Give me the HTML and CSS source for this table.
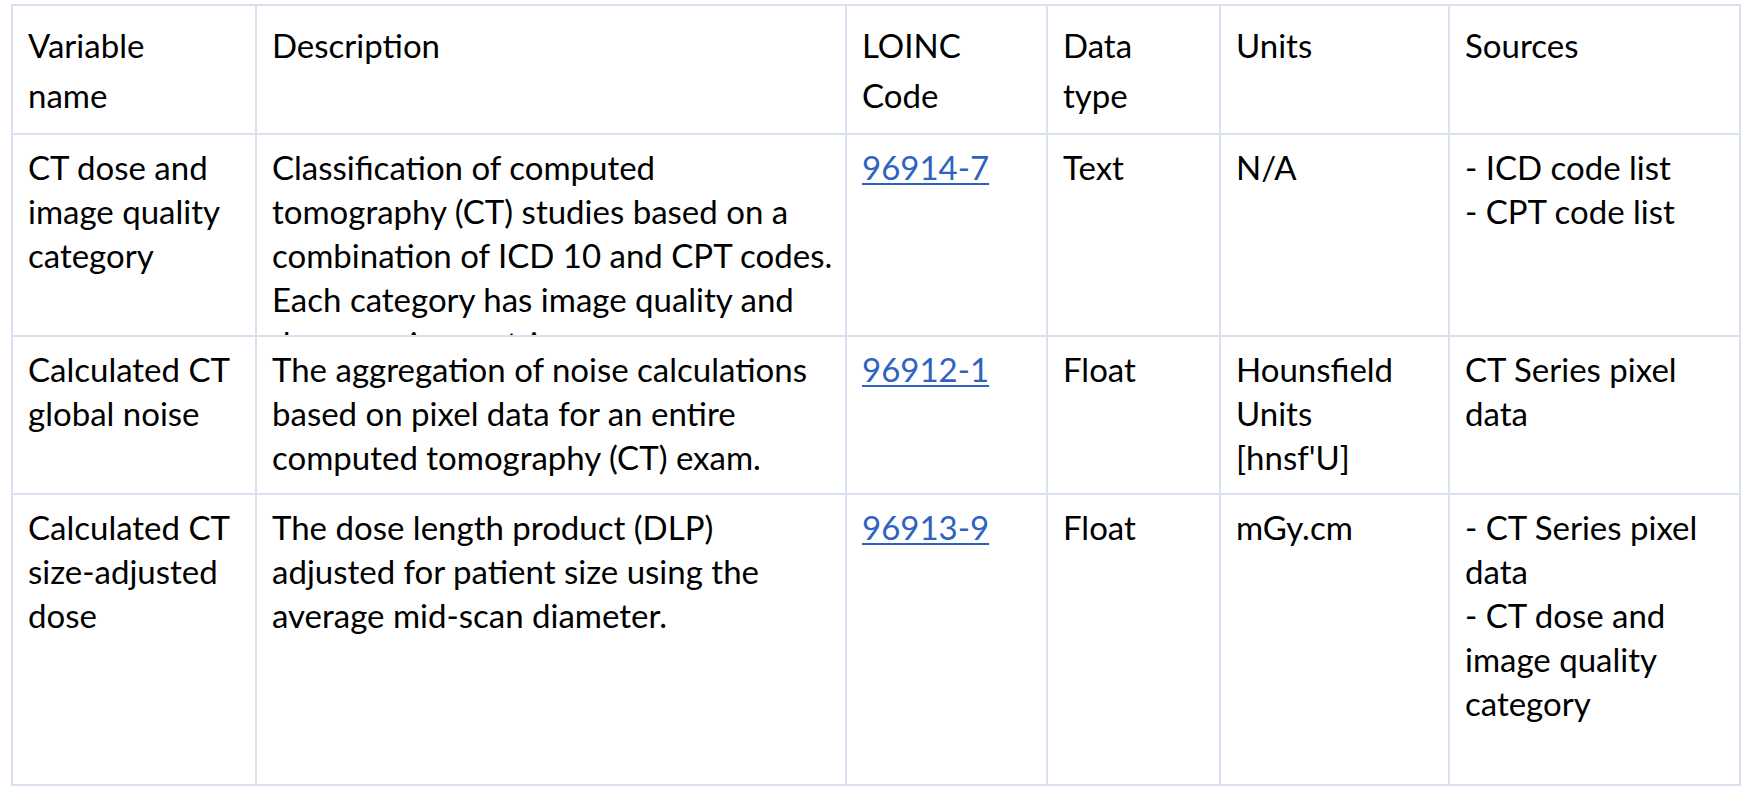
FILE: index.html
```html
<!DOCTYPE html>
<html lang="en">
<head>
<meta charset="utf-8">
<title>CT variables</title>
<link rel="stylesheet" href="styles.css">
</head>
<body>
<table class="vars">
  <colgroup>
    <col class="c-name">
    <col class="c-desc">
    <col class="c-code">
    <col class="c-type">
    <col class="c-units">
    <col class="c-src">
  </colgroup>
  <thead>
    <tr class="head">
      <th>Variable<br>name</th>
      <th>Description</th>
      <th>LOINC<br>Code</th>
      <th>Data<br>type</th>
      <th>Units</th>
      <th>Sources</th>
    </tr>
  </thead>
  <tbody>
    <tr class="r1">
      <td><div class="clip">CT dose and<br>image quality<br>category</div></td>
      <td><div class="clip">Classification of computed<br>tomography (CT) studies based on a<br>combination of ICD 10 and CPT codes.<br>Each category has image quality and<br>dose scoring metrics.</div></td>
      <td><div class="clip"><a href="#">96914-7</a></div></td>
      <td><div class="clip">Text</div></td>
      <td><div class="clip">N/A</div></td>
      <td><div class="clip">- ICD code list<br>- CPT code list</div></td>
    </tr>
    <tr class="r2">
      <td>Calculated CT<br>global noise</td>
      <td>The aggregation of noise calculations<br>based on pixel data for an entire<br>computed tomography (CT) exam.</td>
      <td><a href="#">96912-1</a></td>
      <td>Float</td>
      <td>Hounsfield<br>Units<br>[hnsf'U]</td>
      <td>CT Series pixel<br>data</td>
    </tr>
    <tr class="r3">
      <td>Calculated CT<br>size-adjusted<br>dose</td>
      <td>The dose length product (DLP)<br>adjusted for patient size using the<br>average mid-scan diameter.</td>
      <td><a href="#">96913-9</a></td>
      <td>Float</td>
      <td>mGy.cm</td>
      <td>- CT Series pixel<br>data<br>- CT dose and<br>image quality<br>category</td>
    </tr>
  </tbody>
</table>
</body>
</html>
```
FILE: styles.css
```css
html, body {
  margin: 0;
  padding: 0;
  background: #ffffff;
}

body {
  padding: 4px 0 0 11px;
}

.vars {
  border-collapse: collapse;
  table-layout: fixed;
  width: 1728px;
  font-family: Lato, "Liberation Sans", sans-serif;
  font-size: 33px;
  color: #000000;
}

.c-name { width: 244px; }
.c-desc { width: 590px; }
.c-code { width: 201px; }
.c-type { width: 173px; }
.c-units { width: 229px; }
.c-src { width: 291px; }

.vars th,
.vars td {
  border: 2px solid #d9e0ef;
  padding: 10px 14px 0 15px;
  vertical-align: top;
  text-align: left;
  font-weight: normal;
  white-space: nowrap;
  line-height: 44px;
}

.vars th {
  line-height: 50px;
  padding-top: 14px;
}

.head { height: 129px; }
.r1 { height: 202px; }
.r2 { height: 158px; }
.r3 { height: 291px; }

.clip {
  height: 190px;
  overflow: hidden;
}

.vars a {
  color: #2f63c1;
  text-decoration: underline;
  text-decoration-thickness: 2px;
  text-underline-offset: 3px;
}
```
